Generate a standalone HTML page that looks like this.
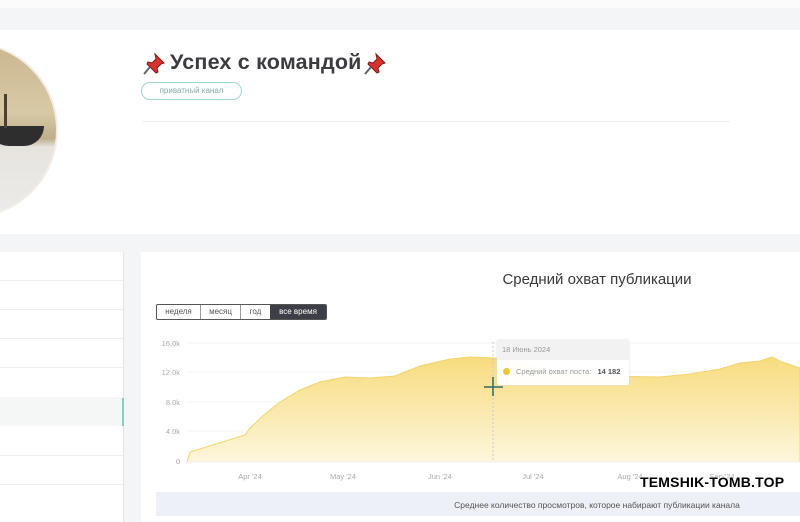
<!DOCTYPE html>
<html><head><meta charset="utf-8"><style>
*{margin:0;padding:0;box-sizing:border-box}
body{width:800px;height:516px;overflow:hidden;background:#f4f5f7;font-family:"Liberation Sans",sans-serif;position:relative}
.abs{position:absolute}
</style></head><body>
<div class="abs" style="left:0;top:0;width:800px;height:8px;background:#fbfbfb"></div>
<div class="abs" style="left:0;top:30px;width:800px;height:204px;background:#fff"></div>
<div class="abs" style="left:-118px;top:42px;width:176px;height:176px;border-radius:50%;overflow:hidden;border:2px solid #f3ece4;background:linear-gradient(#cbb78f 0,#d8c9a6 40%,#bfae8c 55%,#e7e4df 60%,#ecebe9 100%)">
  <div class="abs" style="left:105px;top:82px;width:55px;height:20px;border-radius:0 0 20px 20px;background:#2e2e2e"></div>
  <div class="abs" style="left:120px;top:50px;width:3px;height:34px;background:#4a4036"></div>
</div>
<svg class="abs" style="left:142px;top:52px" width="24" height="24" viewBox="0 0 24 24"><path d="M13 2l9 9-3 1-4 4 1 4-2 1-9-9 1-2 4 1 4-4z" fill="#d8322f" stroke="#7a1b1a" stroke-width="1"/><path d="M8 15l-6 7" stroke="#666" stroke-width="2"/></svg>
<div class="abs" style="left:170px;top:50px;font-size:21.5px;font-weight:bold;color:#3c3c40;letter-spacing:0.2px">Успех с командой</div>
<svg class="abs" style="left:363px;top:52px" width="24" height="24" viewBox="0 0 24 24"><path d="M13 2l9 9-3 1-4 4 1 4-2 1-9-9 1-2 4 1 4-4z" fill="#d8322f" stroke="#7a1b1a" stroke-width="1"/><path d="M8 15l-6 7" stroke="#666" stroke-width="2"/></svg>
<div class="abs" style="left:141px;top:82px;width:101px;height:18px;border:1.5px solid #9fd6cf;border-radius:9px;font-size:8px;color:#8aa;text-align:center;line-height:15px">приватный канал</div>
<div class="abs" style="left:142px;top:121px;width:588px;height:1px;background:#eee"></div>

<div class="abs" style="left:0;top:252px;width:124px;height:270px;background:#fff;border-right:1px solid #e6e6e6"></div>
<div class="abs" style="left:0;top:280px;width:123px;height:1px;background:#eee"></div>
<div class="abs" style="left:0;top:309px;width:123px;height:1px;background:#eee"></div>
<div class="abs" style="left:0;top:338px;width:123px;height:1px;background:#eee"></div>
<div class="abs" style="left:0;top:367px;width:123px;height:1px;background:#eee"></div>
<div class="abs" style="left:0;top:397px;width:123px;height:29px;background:#f4f7f6"></div>
<div class="abs" style="left:122px;top:398px;width:2px;height:28px;background:#86cfc4"></div>
<div class="abs" style="left:0;top:455px;width:123px;height:1px;background:#eee"></div>
<div class="abs" style="left:0;top:484px;width:123px;height:1px;background:#eee"></div>

<div class="abs" style="left:141px;top:252px;width:670px;height:270px;background:#fff"></div>
<div class="abs" style="left:400px;top:271px;width:394px;text-align:center;font-size:15px;color:#3a3a3e">Средний охват публикации</div>
<div class="abs" style="left:156px;top:304px;height:16px;display:flex;font-size:8px;line-height:14px;color:#555;border:1px solid #555;border-radius:2px;overflow:hidden">
<div style="width:44px;text-align:center;border-right:1px solid #999">неделя</div>
<div style="width:40px;text-align:center;border-right:1px solid #999">месяц</div>
<div style="width:29px;text-align:center">год</div>
<div style="width:56px;text-align:center;background:#3d3f48;color:#fff">все время</div>
</div>
<svg class="abs" style="left:141px;top:330px" width="659" height="160" viewBox="141 330 659 160">
<defs><linearGradient id="g" x1="0" y1="0" x2="0" y2="1"><stop offset="0" stop-color="#f7dc7e"/><stop offset="1" stop-color="#fdf6dc"/></linearGradient></defs>
<g stroke="#f3f3f3" stroke-width="1"><line x1="187" y1="343" x2="800" y2="343"/><line x1="187" y1="372" x2="800" y2="372"/><line x1="187" y1="402" x2="800" y2="402"/><line x1="187" y1="431" x2="800" y2="431"/></g>
<path d="M187 462 L190 452 L245 435 L250 428 L265 414 L280 402 L300 390 L320 382 L345 377 L370 378 L395 376 L420 366 L450 359 L470 357 L495 358 L520 362 L550 373 L600 376 L660 377 L690 374 L720 369 L740 363 L760 361 L772 357 L782 362 L800 368 L800 462 Z" fill="url(#g)" stroke="#f1d56a" stroke-width="1"/>
<line x1="187" y1="462" x2="800" y2="462" stroke="#eee"/>
<line x1="493" y1="342" x2="493" y2="462" stroke="#ccc" stroke-dasharray="2,2"/>
<g font-size="7.5" fill="#aaa" font-family="Liberation Sans">
<text x="180" y="346" text-anchor="end">16.0k</text><text x="180" y="375" text-anchor="end">12.0k</text><text x="180" y="405" text-anchor="end">8.0k</text><text x="180" y="434" text-anchor="end">4.0k</text><text x="180" y="464" text-anchor="end">0</text>
<text x="250" y="479" text-anchor="middle">Apr '24</text><text x="343" y="479" text-anchor="middle">May '24</text><text x="440" y="479" text-anchor="middle">Jun '24</text><text x="533" y="479" text-anchor="middle">Jul '24</text><text x="630" y="479" text-anchor="middle">Aug '24</text><text x="722" y="479" text-anchor="middle">Sep '24</text>
</g>
<path d="M484 387H503M493 377V396" stroke="#2f6a6a" stroke-width="1.5"/>
</svg>
<div class="abs" style="left:497px;top:340px;width:132px;height:45px;background:rgba(255,255,255,.95);border-radius:2px;box-shadow:0 0 2px #ddd;font-size:7.5px;color:#999">
<div style="height:20px;background:#f2f2f2;line-height:20px;padding-left:5px">18 Июнь 2024</div>
<div style="padding:7px 0 0 6px;display:flex;align-items:center"><span style="width:7px;height:7px;border-radius:50%;background:#f0c53a;display:inline-block;margin-right:6px"></span>Средний охват поста: <b style="color:#555;margin-left:6px">14 182</b></div>
</div>
<div class="abs" style="left:156px;top:492px;width:644px;height:24px;background:#eef0f7"></div>
<div class="abs" style="left:400px;top:500px;width:394px;text-align:center;font-size:8.5px;color:#555">Среднее количество просмотров, которое набирают публикации канала</div>
<div class="abs" style="left:640px;top:474px;font-size:14px;font-weight:bold;color:#000;letter-spacing:0.2px;text-shadow:0 0 2px #fff,0 0 2px #fff">TEMSHIK-TOMB.TOP</div>
</body></html>
